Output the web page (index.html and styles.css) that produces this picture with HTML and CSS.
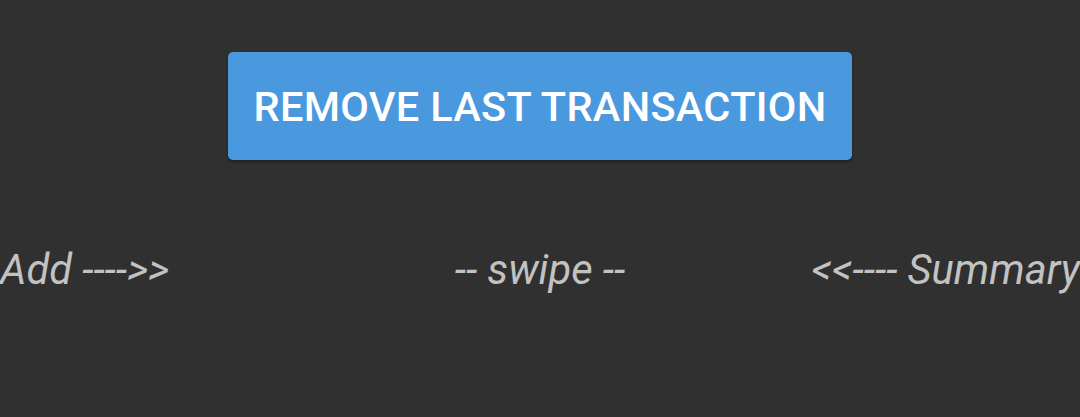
FILE: index.html
```html
<!DOCTYPE html>
<html>
<head>
<meta charset="utf-8">
<link rel="stylesheet" href="styles.css">
</head>
<body>
<div class="screen">
  <div class="top">
    <button class="btn">REMOVE LAST TRANSACTION</button>
  </div>
  <div class="hint">
    <span class="left">Add ----&gt;&gt;</span>
    <span class="mid">-- swipe --</span>
    <span class="right">&lt;&lt;---- Summary</span>
  </div>
</div>
</body>
</html>
```
FILE: styles.css
```css
html, body {
  margin: 0;
  padding: 0;
  background: #303030;
}
.screen {
  width: 1080px;
  height: 417px;
  display: flex;
  flex-direction: column;
  font-family: Roboto, "Noto Sans", sans-serif;
  overflow: hidden;
}
.top {
  display: flex;
  justify-content: center;
  padding-top: 52px;
}
.btn {
  width: 624px;
  height: 108px;
  border: none;
  border-radius: 5px;
  background: #4a98de;
  color: #ffffff;
  font-family: Roboto, sans-serif;
  font-weight: 500;
  font-size: 41.5px;
  letter-spacing: 0.3px;
  padding: 0;
  box-shadow: 0 2px 3px rgba(0,0,0,0.35);
}
.hint {
  display: grid;
  grid-template-columns: 1fr auto 1fr;
  align-items: baseline;
  margin-top: 80px;
  font-style: italic;
  font-size: 41.7px;
  color: #c2c2c2;
  line-height: 60px;
}
.left, .mid, .right {
  white-space: nowrap;
}
.left { justify-self: start; }
.right { justify-self: end; }
```
